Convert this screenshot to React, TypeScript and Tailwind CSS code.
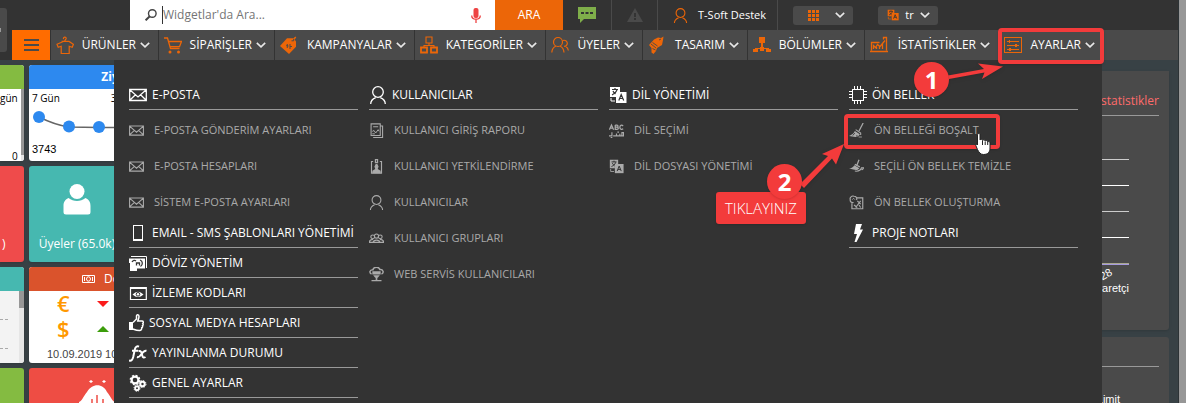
import type { ReactNode } from "react";

type IconProps = { size?: string };

function Svg({ children, className = "h-[18px] w-[18px]", crisp = true }: { children: ReactNode; className?: string; crisp?: boolean }) {
  return (
    <svg
      viewBox="0 0 18 18"
      className={`shrink-0 ${className}`}
      fill="none"
      stroke="currentColor"
      strokeWidth="1"
      shapeRendering={crisp ? "crispEdges" : "auto"}
      aria-hidden="true"
    >
      {children}
    </svg>
  );
}

const big = "h-[18px] w-[18px]";
const small = "h-[15px] w-[15px]";

const Chevron = () => (
  <svg viewBox="0 0 10 6" className="h-[6px] w-[10px] shrink-0" fill="none" stroke="#e8e8e8" strokeWidth="1.6" aria-hidden="true">
    <path d="M.8.8 5 4.8 9.2.8" />
  </svg>
);

const Shirt = () => (
  <Svg crisp={false}>
    <path d="M7.5 3.2c-.6-2.6 3.3-2.6 2.6-.4-.2.8-1.1.7-1.1 1.9M9 4.7 1 8.3l1.2 3 3-1v7.2h8v-7.2l3 1 1.2-3L13 5.4H5.5" strokeWidth="1.2" />
  </Svg>
);
const Cart = () => (
  <Svg crisp={false}>
    <path d="M0 2h3.5l3 10.5h9M4.5 5.5h13l-2 5.2H6" strokeWidth="1.3" />
    <circle cx="6" cy="16" r="1.5" fill="currentColor" stroke="none" />
    <circle cx="14.5" cy="16" r="1.5" fill="currentColor" stroke="none" />
  </Svg>
);
const Tag = () => (
  <Svg crisp={false}>
    <path d="M0 10 7 2.2h6.5l1.8-1.7 1 .9-1.7 2L16 5.5v5.3L9 18z" fill="currentColor" stroke="none" />
    <path d="M11.5 4.8h2.2v-2M7 8l1 2-1 2M10 8v5M6 9.8h2M10 10.5h2" stroke="#4a4a4a" />
  </Svg>
);
const Tree = () => (
  <Svg crisp={false}>
    <path d="M6 1h6v6H6zM9 7v2.500M4 11.500v-2h10v2" strokeWidth="1.1" />
    <path d="M1 11.500h6v5H1zM11 11.500h6v5h-6z" strokeWidth="1.8" />
  </Svg>
);
const Members = () => (
  <Svg crisp={false}>
    <circle cx="7" cy="6" r="4.500" strokeWidth="1.2" />
    <path d="M.8 16.500c.3-4 2.200-5.500 4-6.200M9 10.200c2.500 1 3.800 3 4 6.300M11.800 4.500c2-.8 4.700.4 4.500 3-.2 1.800-1.600 2.900-3.200 2.900M14.800 10.500c1.500.8 2.300 2 2.600 4" strokeWidth="1.2" />
  </Svg>
);
const Design = () => (
  <Svg crisp={false}>
    <path d="M6 3.500 10 1.500 13 2l2.500-1.500L15 4l-1 5-5 3-1 3-2.500 3-2-1.500V12L1 9z" fill="currentColor" stroke="none" />
    <path d="m3 8 5 4M4.500 6.500l5 3.500M4.500 12.500l3 1.500M11 4l2-1" stroke="#4a4a4a" strokeWidth=".9" />
  </Svg>
);
const Sections = () => (
  <Svg>
    <path d="M6 1h6v6H6zM8 7h2v4H8zM7 11h4v4H7zM2 12h14v1H2zM0 13h5v3H0zM13 13h5v3h-5z" fill="currentColor" stroke="none" />
  </Svg>
);
const Stats = () => (
  <Svg crisp={false}>
    <path d="M1.500 14.500v-8h8M13.500 3.500v-2h3v13M3.500 13V9.500l2 2 2-3 2.500 2 5-6M6.500 13v-2M9.500 13v-2.500M12.500 13V8M0 15.500h18" strokeWidth="1.3" />
  </Svg>
);
const Sliders = () => (
  <Svg>
    <path d="M.5 1.500h17v15H.5zM3 5.500h12M3 9.500h12M3 13.500h12" />
    <path d="M5 4h1v3H5zM11 8h2v3h-2zM5 12h2v3H5z" fill="currentColor" stroke="none" />
  </Svg>
);
const Mail = ({ size = big }: IconProps) => (
  <Svg className={size} crisp={false}>
    <path d="M.7 3.500h16.600v11H.7zM1 4l8 7 8-7M1 14l5.500-5.200M17 14l-5.500-5.200" strokeWidth="1.3" />
  </Svg>
);
const Person = ({ size = big }: IconProps) => (
  <Svg className={size} crisp={false}>
    <circle cx="9" cy="6" r="5.300" strokeWidth="1.3" />
    <path d="M1.700 18c0-3.300 1.600-5 5-6.400M16.300 18c0-3.300-1.600-5-5-6.400" strokeWidth="1.3" />
  </Svg>
);
const Phone = () => (
  <Svg>
    <path d="M4 1h10v16H4z" fill="currentColor" stroke="none" />
    <path d="M5 2h8v13H5z" fill="#333" stroke="none" />
  </Svg>
);
const Money = () => (
  <Svg crisp={false}>
    <path d="M2 2.500h15.500V14" />
    <path d="M0 4.500h16v10H8V17H1V9H0z" fill="currentColor" stroke="none" />
    <path d="M3 8c1-2 3-2 4-1M7.500 11.500V9h3v2.500M11 6c3 1 3 5 .5 6.500" stroke="#333" strokeWidth="1.300" />
  </Svg>
);
const Tracking = () => (
  <Svg crisp={false}>
    <path d="M1.500 3.500h15.800v12H1.500zM1.500 4.500h15.800" strokeWidth="1.200" />
    <path d="M3.500 10.500Q9 5 14.500 10.500 9 15.500 3.500 10.500z" fill="currentColor" stroke="none" />
    <circle cx="9" cy="10.300" r="1.800" stroke="#333" />
  </Svg>
);
const Thumb = () => (
  <svg viewBox="0 0 15 18" className="h-[18px] w-[15px] shrink-0" fill="none" stroke="currentColor" strokeWidth="1.500" aria-hidden="true">
    <path d="M0 8h4v8H0z" fill="currentColor" stroke="none" />
    <path d="M4 8.500 7.500 5V2c0-1.700 2.500-1.500 2.500.5 0 2-.8 3-1.200 4.500H13c1.700 0 1.500 2 .8 2.500.6.700.4 1.800-.3 2.200.3.800 0 1.800-.8 2.100.2 1.700-.7 2.700-2.200 2.700-3 0-4-.5-6.500-1.500" />
  </svg>
);
const Fx = () => (
  <Svg crisp={false}>
    <path d="M0 16.500c2.500.8 3.500-.8 4.200-3.500l1.600-7.500C6.400 3 8 1.700 10 2.600M3 6.800h6M9.500 7.200c2.500-.8 3 1 3.700 4 .6 2.500 1.500 3 3.300 1.800M17.500 6.800c-2.500-.5-3.500 1-5 3.200-1.300 2-2.500 3.700-4.500 3" strokeWidth="2" />
  </Svg>
);
const Gears = () => (
  <Svg crisp={false}>
    <circle cx="6" cy="6" r="3.400" strokeWidth="2.200" />
    <circle cx="6" cy="6" r="4.800" strokeWidth="1.200" strokeDasharray="2 1.770" />
    <circle cx="13.500" cy="10" r="2.200" strokeWidth="2" />
    <circle cx="13.500" cy="10" r="3.500" strokeDasharray="1.500 1.240" />
    <circle cx="8" cy="14.300" r="1.900" strokeWidth="1.800" />
    <circle cx="8" cy="14.300" r="3" strokeDasharray="1.300 1.050" />
  </Svg>
);
const Report = () => (
  <Svg className={small} crisp={false}>
    <path d="M2.500 1h11v14h-11zM5 17.300h11.300V3.500h-2.500" strokeWidth="1.300" />
    <path d="M5 4.500h6M4 10l2-1 2 3 3-4 1 2M4 13h3" strokeWidth="1.200" />
  </Svg>
);
const Badge = () => (
  <Svg className={small} crisp={false}>
    <path d="M5 3H3v14h12V3h-2" strokeWidth="1.400" />
    <path d="M7 0h4v5H7zM8 6h2l1.500 3-1 3L14 14v3H4v-3l3.500-2-1-3z" fill="currentColor" stroke="none" />
    <path d="M9 1.500v2" stroke="#333" />
  </Svg>
);
const Group = () => (
  <Svg className={small} crisp={false}>
    <circle cx="4.500" cy="7" r="2.300" strokeWidth="1.300" />
    <circle cx="9" cy="6" r="2.500" strokeWidth="1.300" />
    <circle cx="13.500" cy="7" r="2.300" strokeWidth="1.300" />
    <path d="M0 13.500c1-3 3-3.500 5-3.500M5 13.500c.5-3.500 7.500-3.500 8 0M13 10c2.500 0 4 .5 5 3.500M0 13.500h18" strokeWidth="1.500" />
  </Svg>
);
const WebService = () => (
  <Svg className={small} crisp={false}>
    <path d="M3 8.500C-.5 6.500 1.500 3 4.500 3.500 6-1 12-.5 13 3c4-.5 5.500 4 2 5.500" strokeWidth="1.700" />
    <path d="M4 5h10v4H4zM5 10h8l-2.500 3h-3zM8 13h2v4H8zM3 15.500h12V17H3z" fill="currentColor" stroke="none" />
  </Svg>
);
const Translate = ({ size = big }: IconProps) => (
  <Svg className={size} crisp={false}>
    <path d="M1 1h10v5H7v5H1z" fill="currentColor" stroke="none" />
    <path d="M7 6h10.500v11H7z" fill="currentColor" stroke="none" />
    <path d="M3 3.500h6M6 2v1.500M8 4C7 7 5 8 3 9M4 5c.5 1.500 1.500 2 2.500 3M9.800 14.500 12.200 8.500l2.500 6M10.800 12.500H14" stroke="#333" strokeWidth="1.200" />
    <path d="M2 12v3h4" />
  </Svg>
);
const Abc = () => (
  <Svg className={small} crisp={false}>
    <path d="M.5 8 3 2.500 5.500 8M1.500 6h3M7.500 2.500v5h2.200c2 0 2-2.500 0-2.500H7.500M9.500 5c1.800 0 1.800-2.500 0-2.500h-2M17 3.500c-2-1.800-4-.5-4 1.700S15 8.500 17 7" strokeWidth="1.500" />
    <path d="M0 15.500h3.500V11M5 15.500h4v-3M9 15.500h4V13M13 15.500h4.500v-4h-2v4M2 17.500h2M10 11h2" strokeWidth="1.400" />
  </Svg>
);
const Chip = () => (
  <Svg>
    <path d="M3.500 3.500h11v11h-11z" strokeWidth="1.400" />
    <path d="M5.500 0v3M8.500 0v3M11.500 0v3M5.500 15v3M8.500 15v3M11.500 15v3M0 5.500h3M0 8.500h3M0 11.500h3M15 5.500h3M15 8.500h3M15 11.500h3" />
  </Svg>
);
const Broom = () => (
  <Svg className={small} crisp={false}>
    <path d="M17 0 12 9.500" strokeWidth="1.500" />
    <path d="M8 8 14 12v2.500" strokeWidth="1.300" />
    <path d="M7 9.500 13 13.500c-1 2-3 3.500-5.500 3.200L0 15.500C3.500 14 5.500 12.500 7 9.500z" fill="currentColor" stroke="none" />
    <path d="M4.500 15 7 12M9.500 16.500v-2" stroke="#333" />
    <path d="M11.500 16.800h4" />
  </Svg>
);
const BroomSelected = () => (
  <Svg className={small} crisp={false}>
    <path d="M12 1 9.500 7.500M7 6.500l6 3" strokeWidth="1.500" />
    <path d="M6.500 7.500 12.500 11c-1.500 2-4 2.500-6 2L0 11.500c3-.5 5-1.500 6.500-4z" fill="currentColor" stroke="none" />
    <path d="M7 14.500c4 .5 7-.5 8-4h2.500c-.5 2-1.500 2-2.500 2.500" strokeWidth="1.300" />
  </Svg>
);
const CacheBuild = () => (
  <Svg className={small} crisp={false}>
    <path d="M5.500 9C3 9.500 1 8 1.500 5.500.5 3 3.500.5 6 1.500c2.500 0 4 2 3 4.500" strokeWidth="1.400" />
    <path d="M4 5.500 5.500 4 7 5.500" strokeWidth="1.200" />
    <path d="M9.500 3.500h7v13h-13V10M10 7l4 4M14 7l-6 8M6 12l4 3M12 12l2 3" strokeWidth="1.400" />
  </Svg>
);
const Bolt = () => (
  <Svg crisp={false}>
    <path d="M7 0h6l-2 5.500h3L7.500 18H5.500L8 10H5z" fill="currentColor" stroke="none" />
  </Svg>
);

const navItems = [
  { label: "ÜRÜNLER", icon: <Shirt /> },
  { label: "SİPARİŞLER", icon: <Cart /> },
  { label: "KAMPANYALAR", icon: <Tag /> },
  { label: "KATEGORİLER", icon: <Tree /> },
  { label: "ÜYELER", icon: <Members /> },
  { label: "TASARIM", icon: <Design /> },
  { label: "BÖLÜMLER", icon: <Sections /> },
  { label: "İSTATİSTİKLER", icon: <Stats /> },
  { label: "AYARLAR", icon: <Sliders />, marked: true },
];

type Entry = { label: string; icon: ReactNode; marked?: boolean };
type Section = { label: string; icon: ReactNode; items?: Entry[] };

const columns: Section[][] = [
  [
    {
      label: "E-POSTA",
      icon: <Mail />,
      items: [
        { label: "E-POSTA GÖNDERİM AYARLARI", icon: <Mail size={small} /> },
        { label: "E-POSTA HESAPLARI", icon: <Mail size={small} /> },
        { label: "SİSTEM E-POSTA AYARLARI", icon: <Mail size={small} /> },
      ],
    },
    { label: "EMAIL - SMS ŞABLONLARI YÖNETİMİ", icon: <Phone /> },
    { label: "DÖVİZ YÖNETİM", icon: <Money /> },
    { label: "İZLEME KODLARI", icon: <Tracking /> },
    { label: "SOSYAL MEDYA HESAPLARI", icon: <Thumb /> },
    { label: "YAYINLANMA DURUMU", icon: <Fx /> },
    { label: "GENEL AYARLAR", icon: <Gears /> },
  ],
  [
    {
      label: "KULLANICILAR",
      icon: <Person />,
      items: [
        { label: "KULLANICI GİRİŞ RAPORU", icon: <Report /> },
        { label: "KULLANICI YETKİLENDİRME", icon: <Badge /> },
        { label: "KULLANICILAR", icon: <Person size={small} /> },
        { label: "KULLANICI GRUPLARI", icon: <Group /> },
        { label: "WEB SERVİS KULLANICILARI", icon: <WebService /> },
      ],
    },
  ],
  [
    {
      label: "DİL YÖNETİMİ",
      icon: <Translate />,
      items: [
        { label: "DİL SEÇİMİ", icon: <Abc /> },
        { label: "DİL DOSYASI YÖNETİMİ", icon: <Translate size={small} /> },
      ],
    },
  ],
  [
    {
      label: "ÖN BELLEK",
      icon: <Chip />,
      items: [
        { label: "ÖN BELLEĞİ BOŞALT", icon: <Broom />, marked: true },
        { label: "SEÇİLİ ÖN BELLEK TEMİZLE", icon: <BroomSelected /> },
        { label: "ÖN BELLEK OLUŞTURMA", icon: <CacheBuild /> },
      ],
    },
    { label: "PROJE NOTLARI", icon: <Bolt /> },
  ],
];

function TopBar() {
  return (
    <header className="flex h-[30px] bg-[#333] pl-[130px] text-[11px] text-white">
      <form className="flex w-[433px]" onSubmit={(e) => e.preventDefault()}>
        <label className="flex flex-1 items-center bg-white pr-[14px] pl-[15px]">
          <svg viewBox="0 0 12 12" className="h-3 w-3 shrink-0" fill="none" stroke="#444" strokeWidth="1.400" aria-hidden="true">
            <circle cx="7.300" cy="4.500" r="3.800" />
            <path d="M4.800 7.200.6 11.300" strokeWidth="2" />
          </svg>
          <span className="ml-[5px] h-[18px] w-px bg-[#333]" />
          <input aria-label="Widget ara" placeholder="Widgetlar'da Ara..." className="min-w-0 flex-1 text-[12px] text-[#333] outline-none placeholder:text-[#757575]" />
          <svg viewBox="0 0 10 15" className="h-[15px] w-[10px] shrink-0" aria-hidden="true">
            <rect x="2.500" y="0" width="5" height="10" rx="2" fill="#ee4444" />
            <path d="M.7 7.500c0 5 8.600 5 8.600 0M5 11v4" fill="none" stroke="#ee4444" strokeWidth="1.300" />
          </svg>
        </label>
        <button type="submit" className="w-[68px] bg-[#ec6608] text-[12px]">ARA</button>
      </form>
      <button aria-label="Mesajlar" className="flex w-[49px] items-center justify-center border-r border-[#4a4a4a]">
        <svg viewBox="0 0 18 16" className="h-4 w-[18px]" aria-hidden="true">
          <path d="M0 0h18v12H6l-4 4v-4H0z" fill="#7fae4a" />
          <path d="M3 5h3v2H3zM7.500 5h3v2h-3zM12 5h3v2h-3z" fill="#333" />
        </svg>
      </button>
      <button aria-label="Uyarılar" className="flex w-[46px] items-center justify-center border-r border-[#4a4a4a]">
        <svg viewBox="0 0 16 14" className="h-[14px] w-4" aria-hidden="true">
          <path d="M8 0 16 14H0z" fill="#4a4a4a" />
          <path d="M7 5h2v4H7zM7 10h2v2H7z" fill="#333" />
        </svg>
      </button>
      <button className="flex w-[120px] items-center gap-[10px] border-r border-[#4a4a4a] pl-[15px]">
        <span className="text-[#ec6608]"><Person size="h-[15px] w-[15px]" /></span>
        <span>T-Soft Destek</span>
      </button>
      <div className="flex items-center gap-[25px] pl-[15px]">
        <button aria-label="Uygulamalar" className="flex h-[19px] w-[60px] items-center justify-between rounded-[3px] bg-[#4a4a4a] pr-2 pl-[15px]">
          <svg viewBox="0 0 11 11" className="h-[11px] w-[11px]" fill="#ec6608" shapeRendering="crispEdges" aria-hidden="true">
            <path d="M0 0h3v3H0zM4 0h3v3H4zM8 0h3v3H8zM0 4h3v3H0zM4 4h3v3H4zM8 4h3v3H8zM0 8h3v3H0zM4 8h3v3H4zM8 8h3v3H8z" />
          </svg>
          <Chevron />
        </button>
        <button className="flex h-[19px] w-[60px] items-center justify-between rounded-[3px] bg-[#4a4a4a] pr-2 pl-[9px]">
          <span className="text-[#ec6608]"><Translate size="h-3 w-3" /></span>
          <span>tr</span>
          <Chevron />
        </button>
      </div>
    </header>
  );
}

function NavBar() {
  return (
    <nav className="flex h-[30px] bg-[#333]">
      <div className="w-3" />
      <div className="grid flex-1 grid-cols-[39px_108px_116px_140px_131px_97px_105px_117px_134px_104px] bg-[#4a4a4a]">
        <button aria-label="Menü" className="flex flex-col items-center justify-center gap-[3px] border-r border-[#333] bg-[#ff6c00]">
          <span className="h-[2px] w-[15px] bg-[#4a4a4a]" />
          <span className="h-[2px] w-[15px] bg-[#4a4a4a]" />
          <span className="h-[2px] w-[15px] bg-[#4a4a4a]" />
        </button>
        {navItems.map((n) => (
          <a
            key={n.label}
            href="#"
            className={`relative flex items-center pr-2 pl-[5px] text-[12px] text-white ${n.marked ? "" : "border-r border-[#333]"}`}
          >
            <span className="text-[#ec6608]">{n.icon}</span>
            <span className="flex-1 pr-1 text-right">{n.label}</span>
            <Chevron />
            {n.marked && <span className="absolute -inset-x-px -top-0.5 -bottom-1 z-20 rounded-[4px] border-4 border-[#f33b3b] shadow" />}
          </a>
        ))}
      </div>
    </nav>
  );
}

function Callouts() {
  return (
    <>
      <svg viewBox="0 0 988 170" className="pointer-events-none absolute top-0 left-0 z-20 h-[170px] w-[988px] overflow-visible drop-shadow" fill="#f33b3b" aria-hidden="true">
        <path d="m834 15.500 36-6.500-6-5.500L889 6.500 868 19l2.500-6.500L835 19z" />
        <path d="m686 124 28-28-6-2 22-10-8 20.500-4-6L690 128z" />
      </svg>
      <span className="absolute top-[132px] left-[602px] z-20 flex h-8 w-[90px] items-center justify-center rounded-[3px] bg-[#f33b3b] text-[15px] font-light text-white shadow">TIKLAYINIZ</span>
      <span className="absolute top-[2px] left-[800px] z-20 flex h-[35px] w-[35px] items-center justify-center rounded-full bg-[#f33b3b] text-2xl font-bold text-white shadow">1</span>
      <span className="absolute top-[104px] left-[653px] z-20 flex h-[35px] w-[35px] items-center justify-center rounded-full bg-[#f33b3b] text-2xl font-bold text-white shadow">2</span>
      <svg viewBox="0 0 16 22" className="absolute top-[73px] left-[861px] z-30 h-[22px] w-4" fill="#fff" stroke="#222" strokeWidth="1" aria-hidden="true">
        <path d="M2.500 1.500C2.500.3 5 .3 5 1.500V7c.5-1 2.500-.8 2.500.5.500-1 2.700-.8 2.700.5.500-.8 2.500-.5 2.500.8.800-.5 2.300-.2 2.300 1V15c0 4-2 6.500-6.500 6.500-3 0-4.500-2-6-5L.8 12.500c0-1.500 1-1.500 1.700-.5z" />
        <path d="M7.500 8v4M10.200 8.500v3.500M12.700 9v3" />
      </svg>
    </>
  );
}

function MegaMenu() {
  return (
    <div className="absolute top-0 bottom-0 left-[114px] z-10 w-[988px] bg-[#333] pt-5 pl-[15px]">
      <div className="grid grid-cols-[repeat(4,229px)] gap-x-[11px]">
        {columns.map((sections) => (
          <div key={sections[0].label}>
            {sections.map((s) => (
              <section key={s.label}>
                <h2 className="flex h-[30px] items-center gap-[5px] border-b border-[#999] text-[12px] whitespace-nowrap text-white">
                  {s.icon}
                  {s.label}
                </h2>
                {s.items?.map((it) => (
                  <a key={it.label} href="#" className="relative flex h-9 items-center gap-[10px] pt-[5px] text-[11px] whitespace-nowrap text-[#aaa]">
                    {it.icon}
                    {it.label}
                    {it.marked && <span className="absolute top-1 -left-[5px] h-[35px] w-[156px] rounded-[4px] border-4 border-[#f33b3b] shadow" />}
                  </a>
                ))}
              </section>
            ))}
          </div>
        ))}
      </div>
      <Callouts />
    </div>
  );
}

const tile = "h-24 shrink-0 overflow-hidden shadow-sm";

function Widgets() {
  return (
    <div className="flex gap-[5px] pt-[5px]">
      <div className="flex w-6 flex-col gap-[5px]">
        <div className={`${tile} rounded-r-[3px] bg-white`}>
          <div className="h-6 bg-[#84bb41]" />
          <div className="flex h-[72px]">
            <div className="flex flex-1 flex-col items-end justify-between pt-[3px] pr-[3px] text-[10px] leading-[13px] text-black">
              <span>gün</span>
              <span className="leading-[9px]">0</span>
            </div>
            <div className="w-[5px] bg-[#e6e6e6]"><div className="h-[66px] bg-[#979797]" /></div>
          </div>
        </div>
        <div className={`${tile} flex items-end rounded-r-[3px] bg-[#ef4b4b] pb-[10px] pl-[2px] text-[12px] leading-4 text-white`}>)</div>
        <div className={`${tile} rounded-r-[3px] bg-[#f3f3f3]`}>
          <div className="h-6 bg-[#46b8b0]" />
          <div className="flex h-[72px] justify-between">
            <div className="flex flex-col gap-[28px] pt-[28px]">
              <span className="w-2 border-t border-dashed border-[#aaa]" />
              <span className="w-2 border-t border-dashed border-[#aaa]" />
            </div>
            <div className="w-[5px] bg-[#e6e6e6]"><div className="h-[17px] bg-[#979797]" /></div>
          </div>
        </div>
        <div className={`${tile} rounded-r-[3px] bg-[#84bb41]`} />
      </div>
      <div className="flex w-[197px] flex-col gap-[5px]">
        <div className={`${tile} rounded-[3px] bg-white text-black`}>
          <h3 className="h-6 bg-[#2d89ef] text-center text-[12px] leading-6 font-bold text-white">Ziyaretçi</h3>
          <div className="flex gap-[51px] px-[3px] pt-[3px] text-[10px] leading-[13px]">
            <span>7 Gün</span>
            <span>30 Gün</span>
          </div>
          <svg viewBox="0 0 197 28" className="h-7 w-[197px]" aria-hidden="true">
            <path d="M10 12Q26 20 40 22L70 22.500H190" fill="none" stroke="#666" strokeWidth="1.500" />
            <g fill="#2d89ef">
              <circle cx="10" cy="12" r="6" />
              <circle cx="40" cy="21.500" r="6" />
              <circle cx="70" cy="22" r="6" />
            </g>
          </svg>
          <div className="mt-[10px] px-[3px] font-['Liberation_Sans'] text-[11px] leading-[13px]">3743</div>
        </div>
        <div className={`${tile} flex w-24 flex-col items-center rounded-[3px] bg-[#46b8b0] pt-[18px] text-white`}>
          <svg viewBox="0 0 28 31" className="h-[31px] w-7" fill="#fff" aria-hidden="true">
            <circle cx="14" cy="7.500" r="7.500" />
            <path d="M5.500 14c5 4 12 4 17 0 4 2 5 4.500 5 8v6q0 2.500-2.500 2.500H3Q.5 30.500.5 28v-6c0-3.500 1-6 5-8z" />
          </svg>
          <span className="mt-[21px] text-[12px] leading-4 whitespace-nowrap">Üyeler (65.0k)</span>
        </div>
        <div className={`${tile} rounded-[3px] bg-white`}>
          <h3 className="flex h-6 items-center gap-[9px] bg-[#da532c] pl-[53px] text-[12px] text-white">
            <svg viewBox="0 0 13 8" className="h-2 w-[13px]" fill="none" stroke="#fff" aria-hidden="true">
              <path d="M.5.500h12v7H.5zM2.500 2v4M10.500 2v4" />
              <ellipse cx="6.500" cy="4" rx="2" ry="2.200" />
            </svg>
            Döviz
          </h3>
          <div className="grid grid-cols-[14px_14px] items-center gap-x-[26px] pl-[28px] text-[22px] leading-[25px] font-semibold text-[#ff9800]">
            <span>€</span>
            <svg viewBox="0 0 12 6" className="h-[6px] w-3" aria-hidden="true"><path d="M0 0h12L6 6z" fill="#fb1b1b" /></svg>
            <span>$</span>
            <svg viewBox="0 0 12 6" className="h-[6px] w-3" aria-hidden="true"><path d="M0 6h12L6 0z" fill="#3c9d0b" /></svg>
          </div>
          <div className="pt-[3px] pl-[18px] font-['Liberation_Sans'] text-[11px] leading-[20px] whitespace-nowrap text-[#444]">10.09.2019 10:30</div>
        </div>
        <div className={`${tile} rounded-[3px] bg-[#ee4d44] pt-[11px] pl-[50px]`}>
          <svg viewBox="0 0 36 36" className="h-9 w-9" fill="#fff" aria-hidden="true">
            <path d="M10 2.500 12 1l2 1.500-2 1.500zM23 2.500 25 1l2 1.500L25 4zM0 23c3-1 4-5 8-10 5-9 16-9 20 0 4 5 5 9 8 10v13H0z" />
            <path d="M13 20v4M18 16v8M24 20v4" stroke="#ee4d44" strokeWidth="1.500" />
          </svg>
        </div>
      </div>
      <div className="flex flex-1 flex-col gap-[7px] pt-[6px] pr-[9px]">
        <section className="h-[259px] shrink-0 rounded-b-[3px] bg-[#4a4a4a] pr-[10px] shadow">
          <h3 className="h-[45px] border-b border-[#999] pt-[22px] text-right text-[12px] leading-4 text-[#ff6b6b]">İstatistikler</h3>
          <div className="mr-[30px] flex flex-col gap-[25px] pt-[43px]">
            <span className="h-px bg-[#ccc]" />
            <span className="h-px bg-white" />
            <span className="h-px bg-[#ccc]" />
            <span className="h-px bg-white" />
            <span className="h-[2px] border-b border-[#a79be0] bg-[#a8a890]" />
          </div>
          <div className="mr-[30px] text-right font-['Liberation_Sans'] text-[11px] leading-[13px] text-white">
            <div className="flex justify-end pt-[3px] pr-[17px]"><span className="-rotate-30">28</span></div>
            <div className="pt-px">Ziyaretçi</div>
          </div>
        </section>
        <section className="h-24 shrink-0 rounded-t-[3px] bg-[#4a4a4a] pr-[10px]">
          <div className="h-[30px] border-b border-[#999]" />
          <div className="pt-[25px] pr-[39px] text-right font-['Liberation_Sans'] text-[11px] leading-[14px] text-white">Limit</div>
        </section>
      </div>
    </div>
  );
}

export default function App() {
  return (
    <div className="flex h-screen overflow-hidden bg-[#384145] font-['Open_Sans','Noto_Sans',sans-serif]">
      <div className="relative flex min-w-0 flex-1 flex-col">
        <TopBar />
        <NavBar />
        <div className="absolute top-2 left-0 flex h-11 w-[7px] items-center rounded-r-[3px] bg-[#4a4a4a]">
          <span className="h-1 w-px bg-[#999]" />
        </div>
        <main className="relative min-h-0 flex-1">
          <div className="h-full overflow-hidden"><Widgets /></div>
          <MegaMenu />
        </main>
      </div>
      <div className="w-2 border-l border-[#2d3336] bg-[#979797]" />
    </div>
  );
}
